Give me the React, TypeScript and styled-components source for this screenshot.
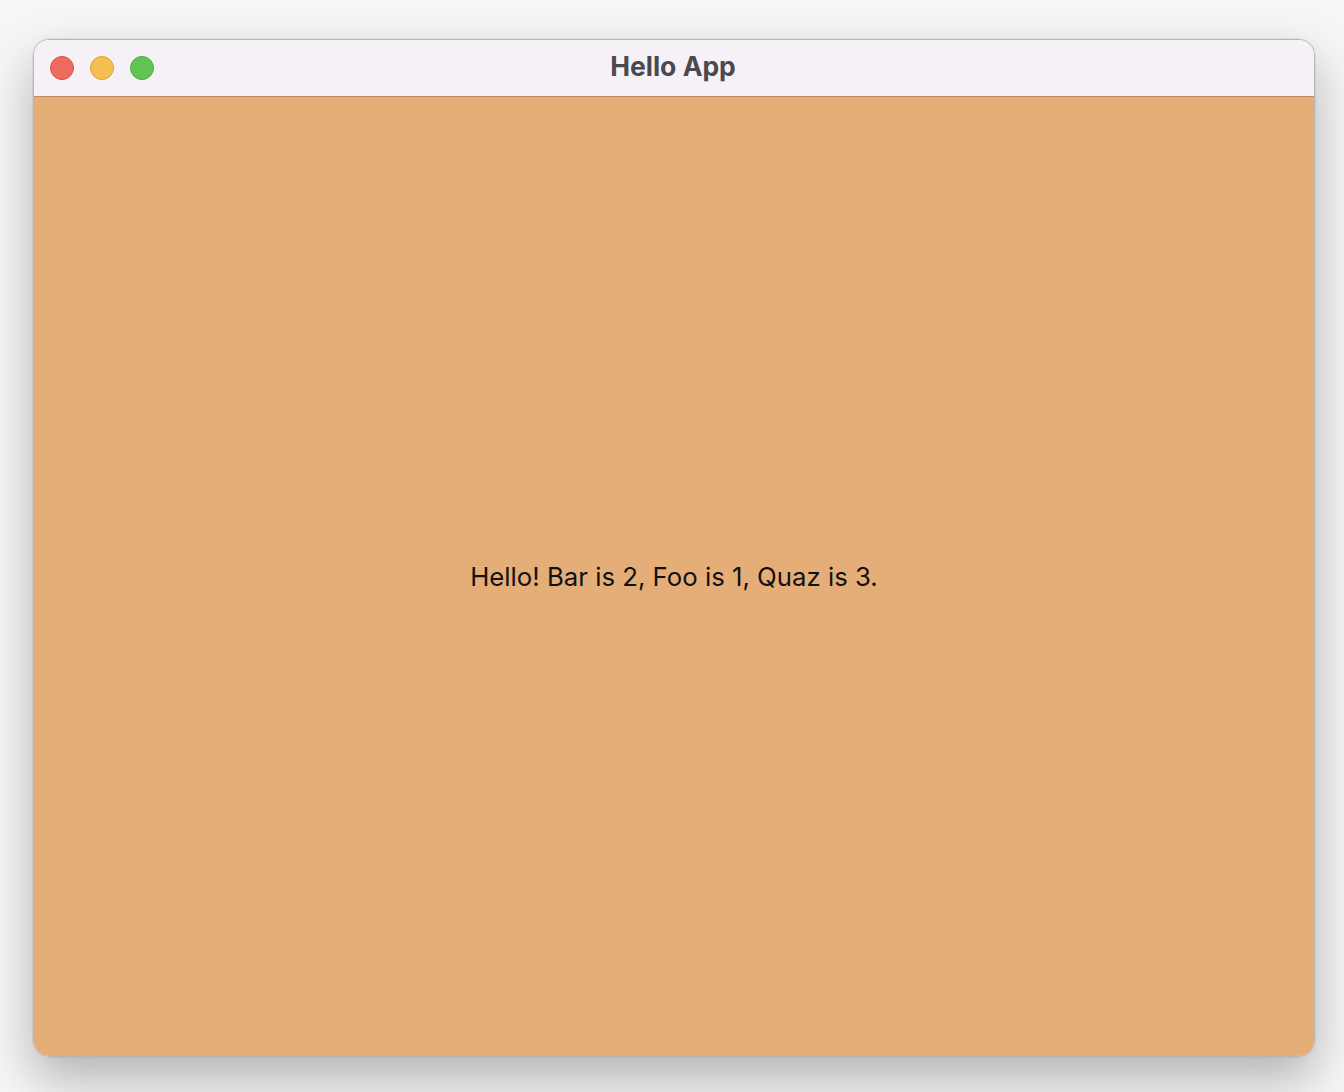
import React from "react";
import styled, { createGlobalStyle } from "styled-components";

const Global = createGlobalStyle`
  html, body { margin: 0; padding: 0; }
  body {
    background: #f4f4f4;
    font-family: Inter, "Noto Sans", sans-serif;
  }
`;

const Page = styled.div`
  width: 1344px;
  height: 1092px;
  box-sizing: border-box;
  padding: 39px 29px 35px 33px;
  background: #f6f6f6;
  display: flex;
`;

const Window = styled.div`
  flex: 1;
  display: flex;
  flex-direction: column;
  border-radius: 16px;
  overflow: hidden;
  border: 1px solid #b9b6ba;
  box-shadow: 0 22px 50px rgba(0, 0, 0, 0.28), 0 0 0 0.5px rgba(0, 0, 0, 0.1);
`;

const TitleBar = styled.div`
  height: 57px;
  flex: none;
  background: #f6f1f7;
  border-bottom: 1px solid #b98b63;
  display: flex;
  align-items: center;
  position: relative;
  padding-left: 16px;
  padding-bottom: 1px;
  box-sizing: border-box;
  gap: 16px;
`;

const Light = styled.span<{ $fill: string; $edge: string }>`
  width: 24px;
  height: 24px;
  border-radius: 50%;
  box-sizing: border-box;
  background: ${(p) => p.$fill};
  border: 1px solid ${(p) => p.$edge};
`;

const Title = styled.div`
  position: absolute;
  left: 0;
  right: 0;
  top: 0;
  bottom: 0;
  display: flex;
  align-items: center;
  justify-content: center;
  font-family: Inter, "Noto Sans", sans-serif;
  font-weight: 700;
  font-size: 26.5px;
  color: #4b494d;
  pointer-events: none;
  padding-bottom: 4px;
  padding-right: 2px;
`;

const Content = styled.div`
  flex: 1;
  background: #e5ae78;
  display: flex;
  align-items: center;
  justify-content: center;
`;

const Message = styled.div`
  font-family: Inter, "Noto Sans", sans-serif;
  font-size: 25.75px;
  color: #111;
`;

export default function App() {
  return (
    <>
      <Global />
      <Page>
        <Window>
          <TitleBar>
            <Light $fill="#ee6a5f" $edge="#d55249" />
            <Light $fill="#f5bf4f" $edge="#d9a33d" />
            <Light $fill="#61c554" $edge="#4ea944" />
            <Title>Hello App</Title>
          </TitleBar>
          <Content>
            <Message>Hello! Bar is 2, Foo is 1, Quaz is 3.</Message>
          </Content>
        </Window>
      </Page>
    </>
  );
}
